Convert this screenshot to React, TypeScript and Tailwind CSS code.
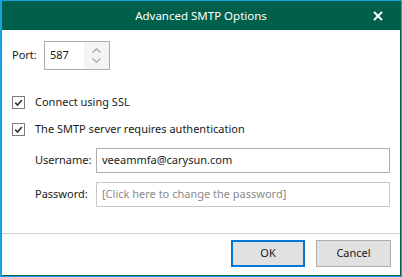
import React from "react";

const font = { fontFamily: '"Noto Sans", "Open Sans", sans-serif' };

function Check() {
  return (
    <div className="w-[13px] h-[13px] border border-[#7a7a7a] bg-white flex items-center justify-center shrink-0">
      <svg width="9" height="9" viewBox="0 0 9 9">
        <path d="M1.2 4.6 L3.6 7 L7.8 2" fill="none" stroke="#333" strokeWidth="1.6" />
      </svg>
    </div>
  );
}

export default function App() {
  return (
    <div
      className="w-[402px] h-[277px] bg-[#1aa0e2] pl-[2px] pt-[1px] pr-[1px] pb-[1px] text-[11px] text-[#1a1a1a]"
      style={font}
    >
      <div className="w-full h-full bg-white flex flex-col border-r border-b border-[#00604c]">
        <div className="h-[29px] bg-[#00604c] flex items-center justify-center relative text-white text-[11.5px] shrink-0">
          <span>Advanced SMTP Options</span>
          <svg className="absolute right-[17px] top-[10px]" width="10" height="10" viewBox="0 0 10 10">
            <path d="M1 1 L9 9 M9 1 L1 9" stroke="white" strokeWidth="2" />
          </svg>
        </div>

        <div className="flex items-center mt-[11px] pl-[10px] h-[29px]">
          <span className="w-[32px]">Port:</span>
          <div className="w-[66px] h-[29px] border border-[#adadad] flex">
            <span className="flex-1 pl-[5px] flex items-center">587</span>
            <div className="w-[25px] flex flex-col items-center justify-center gap-[5px] bg-[#f4f4f4]">
              <svg width="9" height="5" viewBox="0 0 9 5">
                <path d="M0.5 4.5 L4.5 0.8 L8.5 4.5" fill="none" stroke="#a8a8a8" strokeWidth="1.3" />
              </svg>
              <svg width="9" height="5" viewBox="0 0 9 5">
                <path d="M0.5 0.5 L4.5 4.2 L8.5 0.5" fill="none" stroke="#a8a8a8" strokeWidth="1.3" />
              </svg>
            </div>
          </div>
        </div>

        <div className="flex items-center mt-[22px] pl-[10px] h-[20px] gap-[10px]">
          <Check />
          <span>Connect using SSL</span>
        </div>
        <div className="flex items-center mt-[7px] pl-[10px] h-[20px] gap-[10px]">
          <Check />
          <span>The SMTP server requires authentication</span>
        </div>

        <div className="flex items-center mt-[9px] pl-[33px] pr-[10px] h-[25px]">
          <span className="w-[61px]">Username:</span>
          <div className="flex-1 h-[25px] border border-[#adadad] flex items-center pl-[5px]">
            veeammfa@carysun.com
          </div>
        </div>
        <div className="flex items-center mt-[9px] pl-[33px] pr-[10px] h-[25px]">
          <span className="w-[61px]">Password:</span>
          <div className="flex-1 h-[25px] border border-[#c8c8c8] flex items-center pl-[5px] text-[#8a8a8a]">
            [Click here to change the password]
          </div>
        </div>

        <div className="mt-[26px] border-t border-[#d2d2d2] flex justify-end gap-[11px] pt-[6px] pr-[9px]">
          <button className="w-[74px] h-[27px] bg-[#e1e1e1] border border-[#0078d7] outline outline-1 outline-[#0078d7] -outline-offset-2">
            OK
          </button>
          <button className="w-[75px] h-[27px] bg-[#e1e1e1] border border-[#adadad]">
            Cancel
          </button>
        </div>
      </div>
    </div>
  );
}
